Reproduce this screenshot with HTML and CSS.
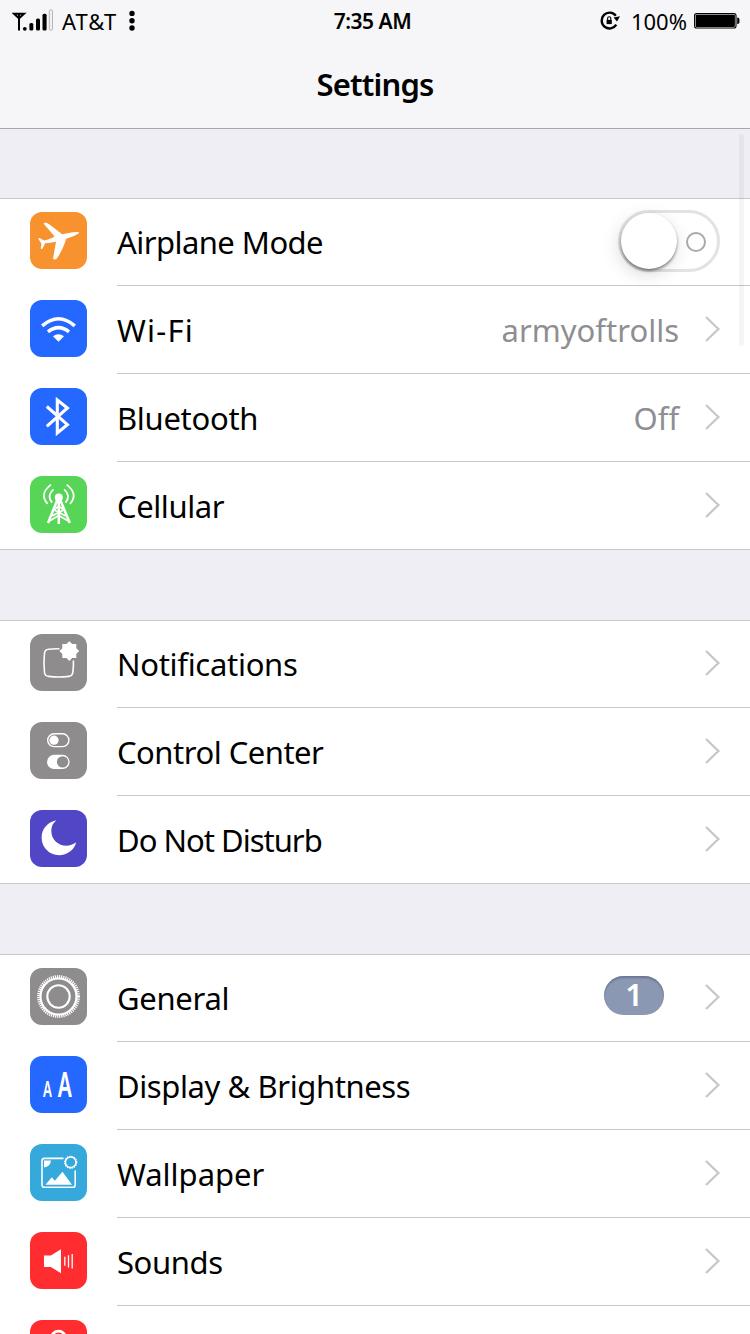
FILE: index.html
```html
<!DOCTYPE html>
<html lang="en">
<head>
    <meta charset="UTF-8">
    <meta name="viewport" content="width=device-width, initial-scale=1.0">
    <title>Settings</title>
    <link rel="stylesheet" href="styles.css">
</head>
<body>
    <header class="header">
        <div class="status-bar">
            <div class="status-left">
                <svg class="signal" width="42" height="24" viewBox="0 0 42 24">
                    <path d="M2 4.8H12L7 9.3ZM7 4V21.5" fill="none" stroke="#000" stroke-width="2"/>
                    <circle cx="12.8" cy="19.8" r="1.9"/>
                    <rect x="17.4" y="14" width="3.9" height="7.6" rx="1.5"/>
                    <rect x="24" y="9.6" width="4" height="12" rx="1.5"/>
                    <rect x="30.5" y="4.8" width="4.1" height="16.8" rx="1.5"/>
                    <rect x="37.3" y="0.8" width="3.2" height="20.4" rx="1.4" fill="#f1f1f2" stroke="#b5b5b7"/>
                </svg>
                <span class="carrier">AT&amp;T</span>
                <svg width="6" height="22" viewBox="0 0 6 22">
                    <circle cx="3" cy="3.4" r="2.7"/>
                    <circle cx="3" cy="10.7" r="2.7"/>
                    <circle cx="3" cy="18" r="2.7"/>
                </svg>
            </div>
            <span class="time">7:35 AM</span>
            <div class="status-right">
                <svg width="20" height="20" viewBox="0 0 20 20">
                    <path d="M16.3 13.7A7.9 7.9 0 1 1 15.8 4.7" fill="none" stroke="#000" stroke-width="2.4"/>
                    <path d="M13.6 6.6L20 5.2L17 10.6Z"/>
                    <rect x="6.6" y="8.9" width="5.2" height="4.2"/>
                    <path d="M7.6 9V7.4A1.6 1.6 0 0 1 10.8 7.4V9" fill="none" stroke="#000" stroke-width="1.1"/>
                </svg>
                <span class="percent">100%</span>
                <svg width="46" height="16" viewBox="0 0 46 16">
                    <rect x="0.6" y="0.6" width="41.4" height="14.4" rx="2" fill="none" stroke="#000" stroke-width="1.1"/>
                    <rect x="1.7" y="1.7" width="39.2" height="12.2" rx="0.8"/>
                    <path d="M43.2 4.4Q45.4 4.6 45.4 6V9.6Q45.4 11 43.2 11.2Z"/>
                </svg>
            </div>
        </div>
        <h1 class="title">Settings</h1>
    </header>

    <main class="settings">
        <section class="group">
            <div class="row">
                <svg class="icon orange" viewBox="0 0 57 57">
                    <path fill="#fff" d="M13.5 11.6C15 10.3 17 10.8 19.5 12.4L32.2 22.2C38.5 21 45.8 19.3 49.2 20.3C48.4 22.8 41.9 24.6 36 27C34.8 33 29.8 42.6 26.8 46.4C25.8 47.6 24 47.8 23 46.8L26 29.7C22.5 30.4 17.8 31.2 15 31.2C14.3 33 13.3 35.2 12.1 37.1L10.7 36.8L11.4 31.7L8.2 26.4L9.6 26.1L14 28.6C18.6 27.4 21.7 26 24.6 24.4Z"/>
                </svg>
                <div class="row-body">
                    <span class="label airplane">Airplane Mode</span>
                    <div class="toggle">
                        <span class="knob"></span>
                        <span class="off-mark"></span>
                    </div>
                </div>
            </div>
            <div class="row">
                <svg class="icon blue" viewBox="0 0 57 57">
                    <path fill="none" stroke="#fff" stroke-width="3.6" d="M12.2 25.9Q28.5 11.6 44.8 25.9M18 31.8Q28.5 23.4 39 31.8"/>
                    <path fill="#fff" d="M22.9 36.2Q28.5 32.5 34 36.2L28.5 41.8Z"/>
                </svg>
                <div class="row-body">
                    <span class="label wifi">Wi-Fi</span>
                    <span class="value">armyoftrolls</span>
                    <svg class="chevron" viewBox="0 0 16 26"><path d="M1 1L13.4 13L1 25"/></svg>
                </div>
            </div>
            <div class="row">
                <svg class="icon blue" viewBox="0 0 57 57">
                    <path fill="none" stroke="#fff" stroke-width="3.1" d="M16.8 18.5L37.4 36.6L27.3 45V12L37.4 20L16.8 38.3"/>
                </svg>
                <div class="row-body">
                    <span class="label bluetooth">Bluetooth</span>
                    <span class="value">Off</span>
                    <svg class="chevron" viewBox="0 0 16 26"><path d="M1 1L13.4 13L1 25"/></svg>
                </div>
            </div>
            <div class="row">
                <svg class="icon green" viewBox="0 0 57 57">
                    <circle cx="28.8" cy="21.5" r="4" fill="#fff"/>
                    <g fill="none" stroke="#fff" stroke-width="2">
                        <path d="M27.3 24L18 47M30.3 24L39.8 47M28.8 24V48" stroke-width="2.5"/>
                        <path d="M24.5 33.5L28.8 30L33.2 33.5M22 40L33.5 34M35.8 40L24.2 34M18.5 45.5L28.8 39.5L39.2 45.5" stroke-width="1.9"/>
                        <path d="M23.4 13.4Q16.3 20 22.2 26.6M34.2 13.4Q41.3 20 35.4 26.6" stroke-width="1.8"/>
                        <path d="M21 8.6Q8.8 18 17.6 27.8M36.6 8.6Q48.8 18 40 27.8" stroke-width="1.8"/>
                    </g>
                </svg>
                <div class="row-body">
                    <span class="label cellular">Cellular</span>
                    <svg class="chevron" viewBox="0 0 16 26"><path d="M1 1L13.4 13L1 25"/></svg>
                </div>
            </div>
        </section>

        <section class="group">
            <div class="row">
                <svg class="icon gray" viewBox="0 0 57 57">
                    <path fill="none" stroke="#fff" stroke-width="1.6" d="M29.5 14.8Q23 14.7 18.5 15.2Q15 15.5 14.5 19Q13.4 29 14.5 38.5Q15 42 18.5 42.4Q29 43.5 39 42.4Q42.3 42 42.8 38.5Q43.7 32.5 43.4 26.5"/>
                    <path fill="#fff" d="M39.3 7.2L42.2 10.1L46.3 10.1L46.3 14.2L49.2 17.1L46.3 20L46.3 24.1L42.2 24.1L39.3 27L36.4 24.1L32.3 24.1L32.3 20L29.4 17.1L32.3 14.2L32.3 10.1L36.4 10.1Z"/>
                </svg>
                <div class="row-body">
                    <span class="label notifications">Notifications</span>
                    <svg class="chevron" viewBox="0 0 16 26"><path d="M1 1L13.4 13L1 25"/></svg>
                </div>
            </div>
            <div class="row">
                <svg class="icon gray" viewBox="0 0 57 57">
                    <rect x="17.7" y="11.8" width="21.2" height="12.8" rx="6.4" fill="none" stroke="#fff" stroke-width="1.4"/>
                    <circle cx="24" cy="18.2" r="4.6" fill="#fff"/>
                    <rect x="17" y="32.8" width="22.6" height="14.2" rx="7.1" fill="#fff"/>
                    <circle cx="32.6" cy="39.9" r="5.7" fill="#8e8c8d"/>
                </svg>
                <div class="row-body">
                    <span class="label control">Control Center</span>
                    <svg class="chevron" viewBox="0 0 16 26"><path d="M1 1L13.4 13L1 25"/></svg>
                </div>
            </div>
            <div class="row">
                <svg class="icon purple" viewBox="0 0 57 57">
                    <path fill="#fff" d="M26.4 10.3C17.5 12.3 11.6 19 11.6 27.6C11.6 37.6 19.4 45.2 29 45.2C37.2 45.2 44.4 40 46.2 32.3C36 40.2 21.3 33.8 21.3 20.8C21.3 16.4 23 13 26.4 10.3Z"/>
                </svg>
                <div class="row-body">
                    <span class="label disturb">Do Not Disturb</span>
                    <svg class="chevron" viewBox="0 0 16 26"><path d="M1 1L13.4 13L1 25"/></svg>
                </div>
            </div>
        </section>

        <section class="group">
            <div class="row">
                <svg class="icon gray" viewBox="0 0 57 57">
                    <g fill="none" stroke="#fff">
                        <circle cx="28.5" cy="28.5" r="20" stroke-width="2.8" stroke-dasharray="1.2 0.894"/>
                        <circle cx="28.5" cy="28.5" r="18" stroke-width="2.2"/>
                        <circle cx="28.5" cy="28.5" r="11.2" stroke-width="2.1"/>
                    </g>
                </svg>
                <div class="row-body">
                    <span class="label general">General</span>
                    <span class="badge">1</span>
                    <svg class="chevron" viewBox="0 0 16 26"><path d="M1 1L13.4 13L1 25"/></svg>
                </div>
            </div>
            <div class="row">
                <div class="icon blue letters">
                    <span class="small-a">A</span>
                    <span class="big-a">A</span>
                </div>
                <div class="row-body">
                    <span class="label display">Display &amp; Brightness</span>
                    <svg class="chevron" viewBox="0 0 16 26"><path d="M1 1L13.4 13L1 25"/></svg>
                </div>
            </div>
            <div class="row">
                <svg class="icon sky" viewBox="0 0 57 57">
                    <path fill="none" stroke="#fff" stroke-width="1.6" d="M33.5 14.4H14.5Q12 14.4 12 17V41Q12 43.3 14.5 43.3H42.8Q45.2 43.3 45.2 41V26.5"/>
                    <path fill="#fff" d="M14 16.5H21Q20.6 22.6 14 23.4ZM15.5 40.7L21.8 33.2L24.8 36.8L32.5 27.8L42 40.7Z"/>
                    <circle cx="40.7" cy="18.3" r="5.3" fill="none" stroke="#fff" stroke-width="1.5"/>
                    <circle cx="40.7" cy="18.3" r="6.1" fill="none" stroke="#fff" stroke-width="1.1" stroke-dasharray="1.3 1.09"/>
                </svg>
                <div class="row-body">
                    <span class="label wallpaper">Wallpaper</span>
                    <svg class="chevron" viewBox="0 0 16 26"><path d="M1 1L13.4 13L1 25"/></svg>
                </div>
            </div>
            <div class="row">
                <svg class="icon red" viewBox="0 0 57 57">
                    <path fill="#fff" d="M14 23.4H20.8L31 17.2V41.2L20.8 35H14Z"/>
                    <path fill="none" stroke="#fff" stroke-width="1.3" d="M34.8 24.8V33.7M38.5 23.2V35.4M42.2 22V36.6"/>
                </svg>
                <div class="row-body">
                    <span class="label sounds">Sounds</span>
                    <svg class="chevron" viewBox="0 0 16 26"><path d="M1 1L13.4 13L1 25"/></svg>
                </div>
            </div>
            <div class="row cut">
                <svg class="icon red" viewBox="0 0 57 57">
                    <circle cx="28.5" cy="18.3" r="7.2" fill="none" stroke="#fff" stroke-width="2.6"/>
                </svg>
            </div>
        </section>
    </main>

    <div class="scrollbar"></div>
</body>
</html>
```

FILE: styles.css
```css
body, html {
    margin: 0;
    padding: 0;
    height: 100%;
    overflow: hidden;
    font-family: "Noto Sans", sans-serif;
    background: #efeef4;
    color: #000;
}

.header {
    height: 128px;
    background: #f6f6f8;
    border-bottom: 1px solid #a6a6ac;
}

.status-bar {
    display: grid;
    grid-template-columns: 1fr auto 1fr;
    align-items: center;
    height: 42px;
    padding: 0 10px 0 12px;
    font-size: 22px;
}

.status-left, .status-right {
    display: flex;
    align-items: center;
}

.status-right {
    justify-content: flex-end;
}

.carrier {
    margin: 0 12px 0 8px;
    letter-spacing: 1px;
}

.time {
    margin-right: 7px;
    font-weight: 600;
    font-size: 21px;
    letter-spacing: -0.5px;
}

.percent {
    margin: 0 7px 0 11px;
}

.title {
    margin: 0;
    line-height: 84px;
    font-size: 31px;
    font-weight: 600;
    letter-spacing: -0.8px;
    text-align: center;
}

.settings {
    box-sizing: border-box;
    height: calc(100% - 129px);
    padding-top: 69px;
    overflow: hidden;
}

.group {
    margin-bottom: 70px;
    background: #fff;
    box-shadow: inset 0 1px #c7c7cc;
}

.group:last-child {
    margin-bottom: 0;
}

.row {
    display: flex;
    box-sizing: border-box;
    height: 88px;
    padding-left: 30px;
}

.row:last-child {
    border-bottom: 1px solid #c7c7cc;
}

.row-body {
    flex: 1;
    display: flex;
    align-items: center;
    box-sizing: border-box;
    height: 88px;
    margin-left: 30px;
    padding-right: 29px;
    border-bottom: 1px solid #c7c7cc;
}

.row:last-child .row-body {
    border-bottom-color: transparent;
}

/* only the top of this row shows above the fold */
.row.cut {
    height: 28px;
    border-bottom: none;
    overflow: hidden;
}

.icon {
    flex: none;
    width: 57px;
    height: 57px;
    margin-top: 14px;
    border-radius: 12px;
}

.orange { background: #f8922f; }
.blue { background: #2468ff; }
.green { background: #57d557; }
.gray { background: #8e8c8d; }
.purple { background: #5146c6; }
.sky { background: #35a9dc; }
.red { background: #ff2d30; }

.label {
    margin-right: auto;
    font-size: 31px;
    letter-spacing: -0.4px;
    white-space: nowrap;
}

.airplane { letter-spacing: -0.55px; }
.wifi { letter-spacing: 1.2px; }
.bluetooth { letter-spacing: -0.3px; }
.notifications { letter-spacing: -0.3px; }
.control { letter-spacing: -0.5px; }
.disturb { letter-spacing: -1px; }
.general { letter-spacing: -0.3px; }
.wallpaper { letter-spacing: 0; }

.value {
    margin-right: 26px;
    color: #8e8e93;
    font-size: 31px;
}

.chevron {
    width: 16px;
    height: 26px;
    margin-bottom: 2px;
    fill: none;
    stroke: #c7c7cc;
    stroke-width: 2.3;
}

.toggle {
    display: flex;
    align-items: center;
    box-sizing: border-box;
    width: 102px;
    height: 62px;
    margin: 0 1px 2px 0;
    border: 3px solid #e3e3e3;
    border-radius: 31px;
}

.knob {
    width: 56px;
    height: 56px;
    border-radius: 50%;
    background: #fff;
    box-shadow: 0 2px 3px rgba(0, 0, 0, 0.45), -2px 5px 18px rgba(0, 0, 0, 0.15);
}

.off-mark {
    box-sizing: border-box;
    width: 20px;
    height: 20px;
    margin: 2px 0 0 9px;
    border: 2px solid #a9a9a9;
    border-radius: 50%;
}

.badge {
    width: 60px;
    height: 39px;
    margin: 0 41px 4px 0;
    border-radius: 20px;
    background: #8b98b3;
    box-shadow: inset 0 2px 2px rgba(60, 70, 95, 0.4);
    color: #fff;
    font-size: 31px;
    font-weight: 600;
    line-height: 37px;
    text-align: center;
}

.letters {
    display: flex;
    align-items: baseline;
    justify-content: center;
    color: #fff;
    font-weight: 600;
}

.small-a {
    margin-right: -2px;
    font-size: 22px;
    transform: scaleX(0.6);
}

.big-a {
    font-size: 35px;
    line-height: 56px;
    transform: scaleX(0.6);
}

.scrollbar {
    position: absolute;
    top: 134px;
    right: 6px;
    width: 5px;
    height: 212px;
    border-radius: 3px;
    background: rgba(0, 0, 0, 0.04);
}
```
